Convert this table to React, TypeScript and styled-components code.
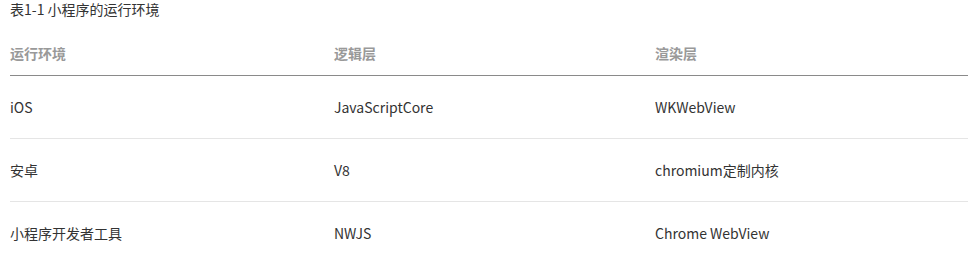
import React from "react";
import styled, {createGlobalStyle} from "styled-components";

const GlobalStyle = createGlobalStyle`
  body {
    margin: 0;
    background: #fff;
    font-family: "Noto Sans CJK SC", "Noto Sans", sans-serif;
    color: #333;
  }
`

const rows = [
    ["iOS", "JavaScriptCore", "WKWebView"],
    ["安卓", "V8", "chromium定制内核"],
    ["小程序开发者工具", "NWJS", "Chrome WebView"],
];

export default function App() {
    return (
        <>
            <GlobalStyle/>
            <Wrapper>
                <Caption>表1-1 小程序的运行环境</Caption>
                <Table>
                    <colgroup>
                        <col style={{width: 324}}/>
                        <col style={{width: 321}}/>
                        <col/>
                    </colgroup>
                    <thead>
                    <tr>
                        <HeadCell>运行环境</HeadCell>
                        <HeadCell>逻辑层</HeadCell>
                        <HeadCell>渲染层</HeadCell>
                    </tr>
                    </thead>
                    <tbody>
                    {rows.map((row, i) => (
                        <Row key={i} $last={i === rows.length - 1}>
                            {row.map((cell, j) => <Cell key={j}>{cell}</Cell>)}
                        </Row>
                    ))}
                    </tbody>
                </Table>
            </Wrapper>
        </>
    );
}

const Wrapper = styled.div`
  padding: 0 1px 0 10px;
`

const Caption = styled.div`
  font-size: 14px;
  line-height: 18px;
  color: #333;
`

const Table = styled.table`
  width: 958px;
  border-collapse: collapse;
  table-layout: fixed;
  margin-top: 13px;
`

const HeadCell = styled.th`
  text-align: left;
  font-size: 14px;
  font-weight: bold;
  color: #999;
  padding: 0;
  height: 44px;
  vertical-align: middle;
  border-bottom: 1px solid #8a8a8a;
`

const Row = styled.tr<{ $last: boolean }>`
  border-bottom: ${p => p.$last ? "none" : "1px solid #e5e5e5"};
`

const Cell = styled.td`
  font-size: 14px;
  color: #333;
  padding: 0;
  height: 62px;
  vertical-align: middle;
`
